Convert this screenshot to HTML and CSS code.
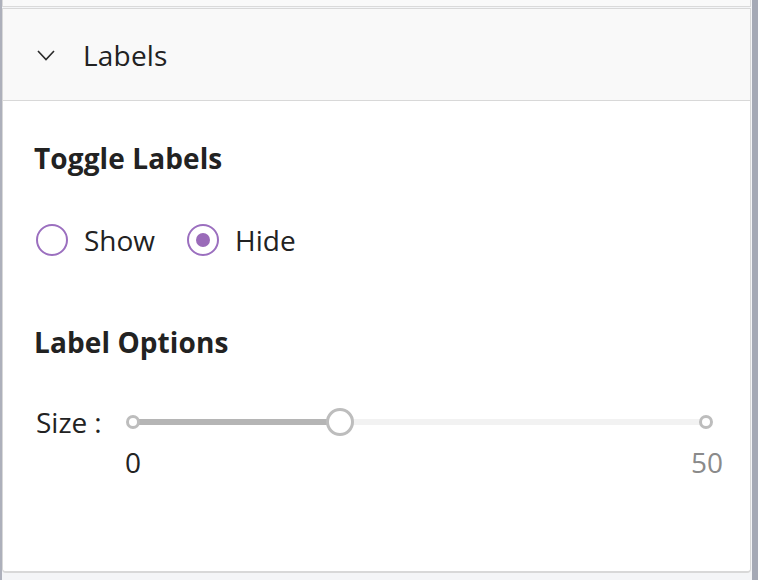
FILE: index.html
```html
<!DOCTYPE html>
<html>
<head>
<meta charset="utf-8">
<link rel="stylesheet" href="styles.css">
</head>
<body>
<div class="app">
  <div class="main">
    <div class="prev"></div>
    <section class="panel">
      <div class="panel-header">
        <svg class="chevron" width="18" height="11" viewBox="0 0 18 11"><path d="M1 1 L9 9.5 L17 1" fill="none" stroke="#2a2a2a" stroke-width="1.6"/></svg>
        <span class="panel-title">Labels</span>
      </div>
      <div class="panel-body">
        <h3 class="section-title">Toggle Labels</h3>
        <div class="radios">
          <label class="radio"><span class="radio-circle"></span><span>Show</span></label>
          <label class="radio"><span class="radio-circle checked"></span><span>Hide</span></label>
        </div>
        <h3 class="section-title second">Label Options</h3>
        <div class="slider-row">
          <span class="slider-label">Size<span class="colon">:</span></span>
          <div class="slider-wrap">
            <div class="slider">
              <div class="track"></div>
              <div class="fill" style="width:36.2%"></div>
              <span class="dot start"></span>
              <span class="dot end"></span>
              <span class="thumb" style="left:36.2%"></span>
            </div>
            <div class="ticks"><span class="min">0</span><span class="max">50</span></div>
          </div>
        </div>
      </div>
    </section>
  </div>
  <div class="scrollbar"></div>
</div>
</body>
</html>
```
FILE: styles.css
```css
html, body { margin: 0; padding: 0; }
body {
  background: #f4f5f7;
  font-family: "Open Sans", "Noto Sans", sans-serif;
  color: #222;
  width: 758px;
  height: 580px;
  overflow: hidden;
}
.app { display: flex; height: 580px; border-left: 2px solid #adb0bb; box-sizing: border-box; }
.main { flex: 1; display: flex; flex-direction: column; padding-right: 1px; }
.scrollbar { width: 6px; background: #a5a9b5; }
.prev { height: 6px; background: #f9f9f9; border: 1px solid #dadada; border-top: 0; }
.panel {
  margin-top: 1px;
  border: 1px solid #d8d8d8;
  border-bottom-width: 2px;
  border-radius: 0 0 4px 4px;
  background: #fff;
  box-sizing: border-box;
  height: 565px;
}
.panel-header {
  height: 92px;
  box-sizing: border-box;
  background: #f9f9f9;
  border-bottom: 1px solid #d8d8d8;
  display: flex;
  align-items: center;
  padding-left: 34px;
}
.chevron { margin-right: 28px; margin-top: 2px; }
.panel-title { font-family: "Open Sans", sans-serif; font-size: 28px; color: #222; letter-spacing: 0.2px; }
.panel-body { padding: 40px 33px 0 31px; }
.section-title { margin: 0; font-size: 28px; font-weight: 700; color: #222; line-height: 34px; letter-spacing: 0.1px; }
.section-title.second { margin-top: 68px; }
.radios { display: flex; gap: 32px; margin-top: 48px; padding-left: 2px; }
.radio { display: flex; align-items: center; font-size: 28px; line-height: 34px; }
.radio-circle {
  width: 32px; height: 32px; box-sizing: border-box;
  border: 2px solid #9b6fbf; border-radius: 50%;
  margin-right: 16px; display: flex; align-items: center; justify-content: center;
}
.radio-circle.checked::after {
  content: ""; width: 14px; height: 14px; border-radius: 50%; background: #9a6bb9;
}
.slider-row { display: flex; margin-top: 48px; padding-left: 2px; }
.slider-label { font-size: 28px; width: 97px; line-height: 30px; white-space: nowrap; }
.colon { margin-left: 7px; }
.slider-wrap { flex: 1; margin-right: 11px; }
.slider { position: relative; height: 30px; }
.track { position: absolute; left: 0; right: 0; top: 12px; height: 6px; background: #f2f2f2; border-radius: 3px; }
.fill { position: absolute; left: 0; top: 12px; height: 6px; background: #b5b5b5; }
.dot { position: absolute; top: 8px; width: 14px; height: 14px; box-sizing: border-box; border: 3px solid #bdbdbd; border-radius: 50%; background: #fff; }
.dot.start { left: -7px; }
.dot.end { right: -7px; }
.thumb { position: absolute; top: 1px; width: 28px; height: 28px; margin-left: -14px; box-sizing: border-box; border: 3px solid #bdbdbd; border-radius: 50%; background: #fff; }
.ticks { display: flex; justify-content: space-between; font-size: 28px; line-height: 34px; margin-top: 8px; margin-left: -8px; margin-right: -17px; }
.ticks .min { color: #222; }
.ticks .max { color: #8a8a8a; }
```
